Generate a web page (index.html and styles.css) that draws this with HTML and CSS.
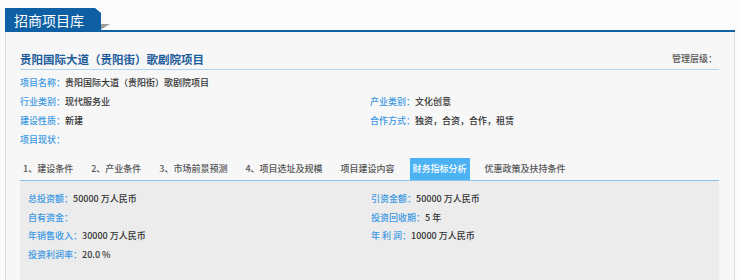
FILE: index.html
```html
<!DOCTYPE html>
<html lang="zh-CN">
<head>
    <meta charset="UTF-8">
    <title>招商项目库</title>
    <link rel="stylesheet" href="styles.css">
</head>
<body>

<div class="wrap">
    <div class="head">
        <span class="head-tab">招商项目库</span>
    </div>

    <div class="panel">
        <div class="title-row">
            <h2>贵阳国际大道（贵阳街）歌剧院项目</h2>
            <span class="level">管理层级：</span>
        </div>

        <div class="info">
            <div class="item full"><span class="lbl">项目名称：</span>贵阳国际大道（贵阳街）歌剧院项目</div>
            <div class="item"><span class="lbl">行业类别：</span>现代服务业</div>
            <div class="item"><span class="lbl">产业类别：</span>文化创意</div>
            <div class="item"><span class="lbl">建设性质：</span>新建</div>
            <div class="item"><span class="lbl">合作方式：</span>独资，合资，合作，租赁</div>
            <div class="item full"><span class="lbl">项目现状：</span></div>
        </div>

        <ul class="tabs">
            <li>1、建设条件</li>
            <li>2、产业条件</li>
            <li>3、市场前景预测</li>
            <li>4、项目选址及规模</li>
            <li>项目建设内容</li>
            <li class="active">财务指标分析</li>
            <li>优惠政策及扶持条件</li>
        </ul>

        <div class="tab-body">
            <div class="item"><span class="lbl">总投资额：</span>50000 万人民币</div>
            <div class="item"><span class="lbl">引资金额：</span>50000 万人民币</div>
            <div class="item"><span class="lbl">自有资金：</span></div>
            <div class="item"><span class="lbl">投资回收期：</span>5 年</div>
            <div class="item"><span class="lbl">年销售收入：</span>30000 万人民币</div>
            <div class="item"><span class="lbl">年 利 润：</span>10000 万人民币</div>
            <div class="item"><span class="lbl">投资利润率：</span>20.0 %</div>
        </div>
    </div>
</div>

</body>
</html>
```

FILE: styles.css
```css
body {
    margin: 0;
    background-color: #fbfbfb;
    font-family: "Noto Sans CJK SC", "Liberation Sans", sans-serif;
    color: #333;
    height: 280px;
    overflow: hidden;
}

.wrap {
    padding: 7px 5px 0 5px;
}

/* Header tab with its folded corner */
.head {
    position: relative;
    height: 23px;
    border-bottom: 2px solid #0e5fa4;
}

.head::before {
    content: "";
    position: absolute;
    left: 95px;
    top: 17px;
    border-top: 6px solid #9b9b9b;
    border-right: 10px solid transparent;
}

.head-tab {
    display: inline-block;
    height: 23px;
    line-height: 24px;
    padding: 0 17px 0 9px;
    background-color: #0e5fa4;
    color: #fff;
    font-size: 14px;
    clip-path: polygon(0 0, 90px 0, 100% 5px, 100% 100%, 0 100%);
}

/* Panel */
.panel {
    background-color: #f7f7f7;
    border-left: 1px solid #dcdcdc;
    border-right: 1px solid #dcdcdc;
    padding: 0 15px 0 14px;
    height: 260px;
}

.title-row {
    display: flex;
    justify-content: space-between;
    align-items: center;
    padding: 16px 2px 0 0;
    height: 21px;
    border-bottom: 1px solid #b3d4f1;
}

.title-row h2 {
    margin: 0;
    font-size: 11.5px;
    font-weight: bold;
    color: #1e5c9c;
}

.level {
    font-size: 9px;
    font-weight: 500;
    color: #555;
}

.info {
    display: grid;
    grid-template-columns: 350px 1fr;
    padding-top: 3px;
    font-size: 9px;
    font-weight: 500;
    line-height: 19px;
}

.info .full {
    grid-column: 1 / 3;
}

.lbl {
    color: #3a98e4;
}

/* Tabs */
.tabs {
    list-style: none;
    margin: 9px 0 0 0;
    padding: 0;
    display: flex;
    gap: 12px;
    border-bottom: 1px solid #8cc2ee;
}

.tabs li {
    padding: 0 3px;
    height: 22px;
    line-height: 22px;
    font-size: 9px;
    font-weight: 500;
    color: #555;
}

.tabs li.active {
    background-color: #4bb2f3;
    color: #fff;
}

.tab-body {
    display: grid;
    grid-template-columns: 343px 1fr;
    background-color: #ececec;
    padding: 9px 8px 20px 8px;
    font-size: 9px;
    font-weight: 500;
    line-height: 18.5px;
}
```
